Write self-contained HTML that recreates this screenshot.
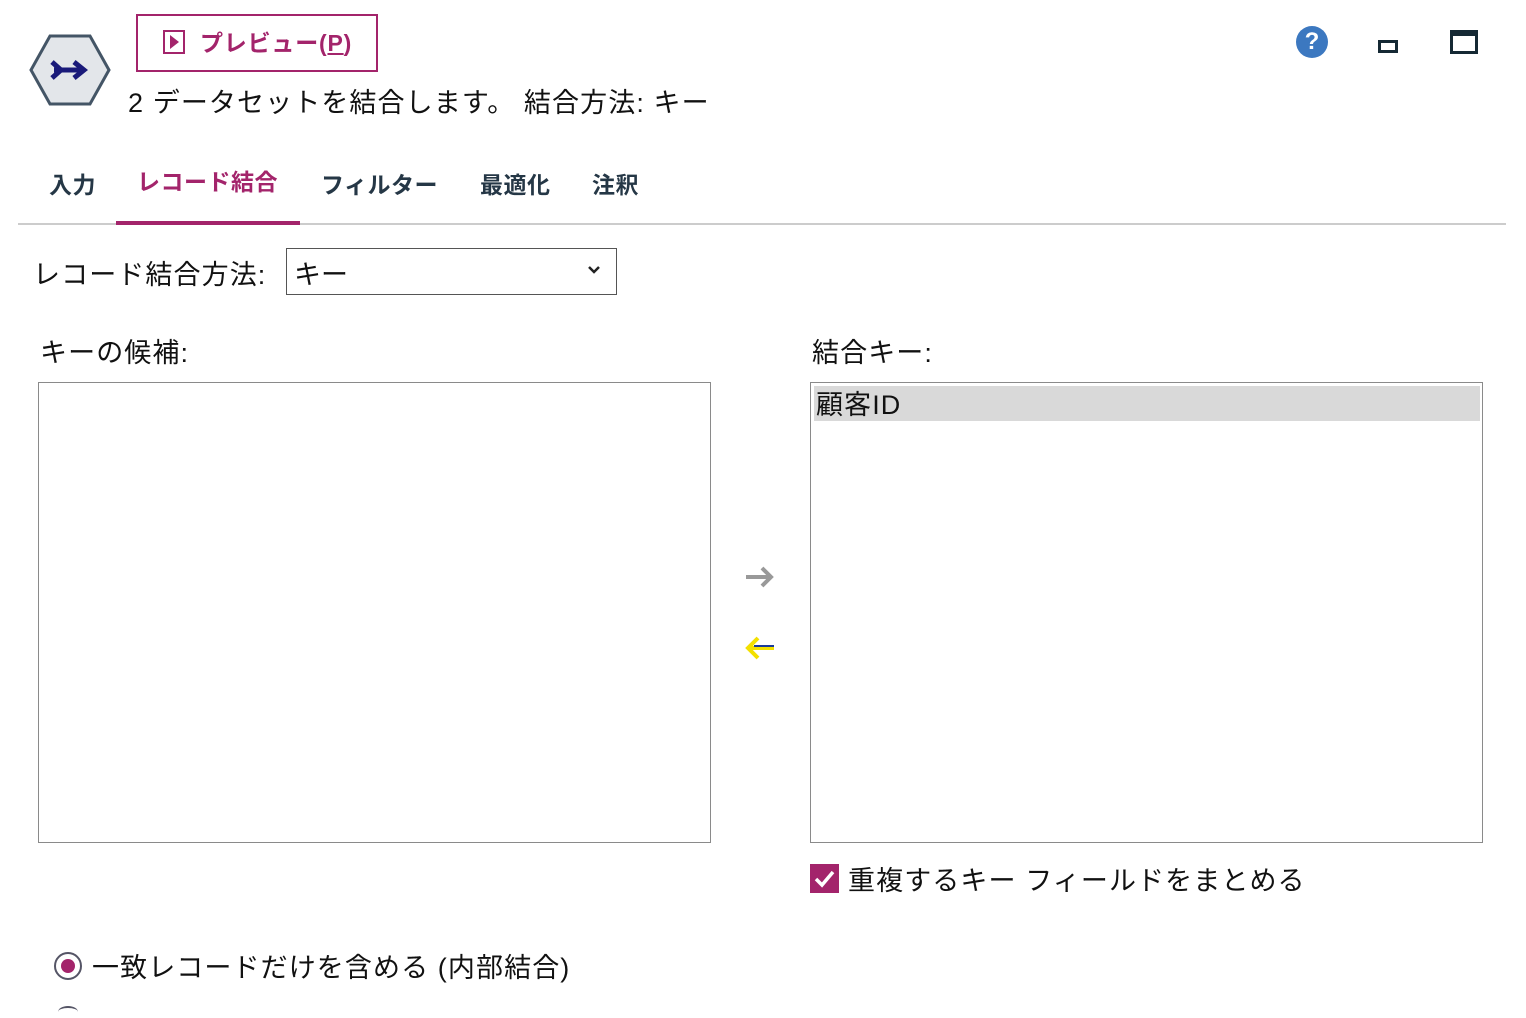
<!DOCTYPE html>
<html><head><meta charset="utf-8"><style>
body{margin:0;width:1526px;height:1010px;overflow:hidden;background:#fff;font-family:"Liberation Sans","Noto Sans CJK JP",sans-serif;color:#111;position:relative}
.a{position:absolute;white-space:nowrap}
.tab{position:absolute;top:166px;font-size:23px;font-weight:bold;color:#253746;letter-spacing:0.5px}
.box{position:absolute;border:1px solid #8a8a8a;background:#fff}
.t{letter-spacing:1.1px}
</style></head><body>
<svg class="a" style="left:28px;top:33px" width="84" height="74" viewBox="0 0 84 74"><polygon points="22,3 62,3 81,37 62,71 22,71 3,37" fill="#e3e6ea" stroke="#445566" stroke-width="3"/><path d="M24 29 L33 37 L24 45 M26 37 H56 M46 29 L56 37 L46 45" fill="none" stroke="#1a1a7a" stroke-width="5"/></svg>
<div class="a" style="left:136px;top:14px;width:242px;height:58px;border:2px solid #a3246b;box-sizing:border-box"></div>
<div class="a" style="left:163px;top:30px;width:22px;height:24px;border:2px solid #a3246b;box-sizing:border-box"></div>
<div class="a" style="left:170px;top:35px;width:0;height:0;border-left:9px solid #a3246b;border-top:7px solid transparent;border-bottom:7px solid transparent"></div>
<div class="a" style="left:200px;top:24px;font-size:23px;font-weight:bold;color:#a3246b;letter-spacing:0.8px">プレビュー(<u>P</u>)</div>
<div class="a t" style="left:128px;top:81px;font-size:27px">2 データセットを結合します。 結合方法: キー</div>
<div class="a" style="left:1296px;top:26px;width:32px;height:32px;border-radius:50%;background:#3c78c0;color:#fff;font-weight:bold;font-size:24px;text-align:center;line-height:32px">?</div>
<div class="a" style="left:1378px;top:40px;width:20px;height:13px;border:3px solid #152934;box-sizing:border-box"></div>
<div class="a" style="left:1450px;top:30px;width:28px;height:24px;border:3px solid #152934;border-top-width:6px;box-sizing:border-box"></div>
<div class="tab" style="left:49px">入力</div>
<div class="tab" style="left:137px;top:163px;color:#a3246b">レコード結合</div>
<div class="tab" style="left:321px">フィルター</div>
<div class="tab" style="left:480px">最適化</div>
<div class="tab" style="left:592px">注釈</div>
<div class="a" style="left:18px;top:223px;width:1488px;height:2px;background:#ccc"></div>
<div class="a" style="left:116px;top:221px;width:184px;height:4px;background:#a3246b"></div>
<div class="a t" style="left:33px;top:253px;font-size:27px">レコード結合方法:</div>
<div class="a" style="left:286px;top:248px;width:331px;height:47px;border:1px solid #555;box-sizing:border-box"></div>
<div class="a" style="left:294px;top:253px;font-size:27px">キー</div>
<svg class="a" style="left:587px;top:265px" width="14" height="10"><path d="M2 2 L7 7 L12 2" fill="none" stroke="#222" stroke-width="2.5"/></svg>
<div class="a t" style="left:40px;top:331px;font-size:27px">キーの候補:</div>
<div class="a t" style="left:812px;top:331px;font-size:27px">結合キー:</div>
<div class="box" style="left:38px;top:382px;width:671px;height:459px"></div>
<div class="box" style="left:810px;top:382px;width:671px;height:459px"></div>
<div class="a" style="left:814px;top:386px;width:666px;height:35px;background:#d9d9d9"></div>
<div class="a t" style="left:816px;top:383px;font-size:27px">顧客ID</div>
<svg class="a" style="left:744px;top:562px" width="32" height="100"><path d="M2 15 H26 M18 6 L27 15 L18 24" fill="none" stroke="#999" stroke-width="4"/><path d="M30 86 H6 M14 76 L4 86 L14 96" fill="none" stroke="#f3e000" stroke-width="4"/><path d="M30 84 H10" stroke="#1a3a9a" stroke-width="2"/></svg>
<div class="a" style="left:810px;top:864px;width:29px;height:29px;background:#a3246b"></div>
<svg class="a" style="left:810px;top:864px" width="29" height="29"><path d="M6 15 L12 21 L23 8" fill="none" stroke="#fff" stroke-width="3.5"/></svg>
<div class="a t" style="left:848px;top:859px;font-size:27px">重複するキー フィールドをまとめる</div>
<div class="a" style="left:54px;top:952px;width:28px;height:28px;border:2px solid #556;border-radius:50%;box-sizing:border-box"></div>
<div class="a" style="left:61px;top:959px;width:14px;height:14px;background:#a3246b;border-radius:50%"></div>
<div class="a t" style="left:92px;top:946px;font-size:27px">一致レコードだけを含める (内部結合)</div>
<div class="a" style="left:58px;top:1006px;width:20px;height:10px;border-top:2px solid #556;border-radius:50%"></div>
</body></html>
